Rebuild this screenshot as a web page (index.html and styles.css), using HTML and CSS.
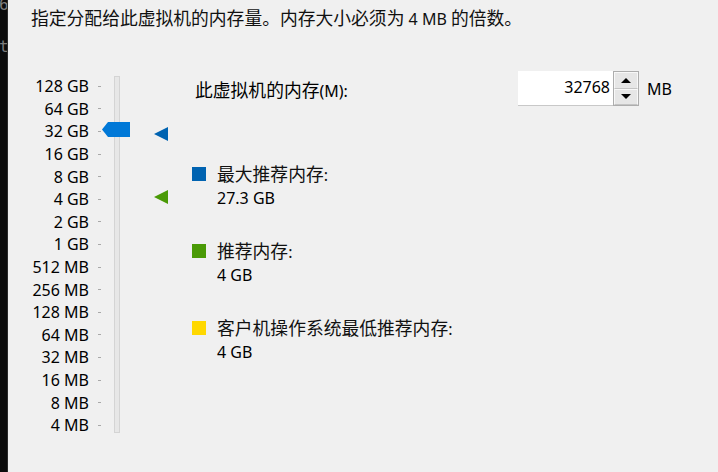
FILE: index.html
```html
<!DOCTYPE html>
<html lang="zh-CN">
<head>
<meta charset="utf-8">
<title>内存</title>
<link rel="stylesheet" href="styles.css">
</head>
<body>
<div class="window">
  <div class="strip"><span class="s1">6</span><span class="s2">t</span></div>
  <div class="page">
    <p class="intro"><span class="cjk">指定分配给此虚拟机的内存量。内存大小必须为</span> 4 MB <span class="cjk">的倍数。</span></p>
    <div class="body">
      <div class="slider">
        <div class="scale">
          <div class="row"><span class="lbl">128 GB</span><span class="tick"></span></div>
          <div class="row"><span class="lbl">64 GB</span><span class="tick"></span></div>
          <div class="row"><span class="lbl">32 GB</span><span class="tick"></span></div>
          <div class="row"><span class="lbl">16 GB</span><span class="tick"></span></div>
          <div class="row"><span class="lbl">8 GB</span><span class="tick"></span></div>
          <div class="row"><span class="lbl">4 GB</span><span class="tick"></span></div>
          <div class="row"><span class="lbl">2 GB</span><span class="tick"></span></div>
          <div class="row"><span class="lbl">1 GB</span><span class="tick"></span></div>
          <div class="row"><span class="lbl">512 MB</span><span class="tick"></span></div>
          <div class="row"><span class="lbl">256 MB</span><span class="tick"></span></div>
          <div class="row"><span class="lbl">128 MB</span><span class="tick"></span></div>
          <div class="row"><span class="lbl">64 MB</span><span class="tick"></span></div>
          <div class="row"><span class="lbl">32 MB</span><span class="tick"></span></div>
          <div class="row"><span class="lbl">16 MB</span><span class="tick"></span></div>
          <div class="row"><span class="lbl">8 MB</span><span class="tick"></span></div>
          <div class="row"><span class="lbl">4 MB</span><span class="tick"></span></div>
        </div>
        <div class="track"></div>
        <svg class="thumb" width="28" height="15" viewBox="0 0 28 15"><polygon points="0,7.5 6,0 28,0 28,15 6,15" fill="#0078d7"/></svg>
        <svg class="marker marker-max" width="14" height="14" viewBox="0 0 14 14"><polygon points="0,7 14,0 14,14" fill="#0063b1"/></svg>
        <svg class="marker marker-rec" width="14" height="14" viewBox="0 0 14 14"><polygon points="0,7 14,0 14,14" fill="#4a9a06"/></svg>
      </div>
      <div class="panel">
        <div class="mem-row">
          <span class="mem-label"><span class="cjk">此虚拟机的内存</span>(M):</span>
          <div class="spin">
            <div class="spin-input">32768</div>
            <div class="spin-btns">
              <div class="spin-btn"><span class="arrow-up"></span></div>
              <div class="spin-btn"><span class="arrow-down"></span></div>
            </div>
          </div>
          <span class="unit">MB</span>
        </div>
        <div class="legend">
          <div class="item">
            <span class="swatch swatch-blue"></span>
            <span class="item-label"><span class="cjk">最大推荐内存</span>:</span>
            <span class="item-value">27.3 GB</span>
          </div>
          <div class="item">
            <span class="swatch swatch-green"></span>
            <span class="item-label"><span class="cjk">推荐内存</span>:</span>
            <span class="item-value">4 GB</span>
          </div>
          <div class="item">
            <span class="swatch swatch-yellow"></span>
            <span class="item-label"><span class="cjk">客户机操作系统最低推荐内存</span>:</span>
            <span class="item-value">4 GB</span>
          </div>
        </div>
      </div>
    </div>
  </div>
</div>
</body>
</html>
```
FILE: styles.css
```css
html, body {
  margin: 0;
  padding: 0;
}
body {
  background: #f0f0f0;
  font-family: "Noto Sans", "Noto Sans CJK SC", sans-serif;
  font-size: 16px;
  color: #000;
}
.window {
  display: flex;
  width: 718px;
  height: 472px;
  overflow: hidden;
}
.strip {
  width: 7px;
  flex: none;
  background: #0c0c0c;
  border-right: 1px solid #2b2b2b;
  overflow: hidden;
  display: flex;
  flex-direction: column;
  font-family: "DejaVu Sans Mono", monospace;
  font-size: 16px;
  line-height: 20px;
  color: #7c7c7c;
}
.strip span {
  display: block;
  margin-left: -1px;
}
.strip .s1 { margin-top: -5px; }
.strip .s2 { margin-top: 22px; }
.page {
  flex: 1;
  display: flex;
  flex-direction: column;
}
.cjk {
  font-family: "Noto Sans CJK SC", sans-serif;
  font-size: 17.8px;
}
.intro {
  margin: 0;
  height: 40px;
  box-sizing: border-box;
  padding: 6px 0 0 23px;
  line-height: 23px;
  color: #111;
}
.body {
  display: flex;
  flex: 1;
}
.slider {
  position: relative;
  width: 184px;
  flex: none;
  display: flex;
  align-items: flex-start;
  padding-top: 35px;
  box-sizing: border-box;
}
.scale {
  margin-left: 12px;
  display: flex;
  flex-direction: column;
}
.row {
  height: 22.6px;
  display: flex;
  align-items: center;
}
.lbl {
  width: 69px;
  text-align: right;
  line-height: 20px;
  white-space: nowrap;
}
.tick {
  margin-left: 9px;
  width: 3px;
  height: 1px;
  background: #a8a8a8;
}
.track {
  margin-left: 13px;
  margin-top: 1px;
  width: 6px;
  height: 357px;
  box-sizing: border-box;
  background: #e7e7e7;
  border: 1px solid #d4d4d4;
}
.thumb {
  position: absolute;
  left: 94px;
  top: 82px;
}
.marker {
  position: absolute;
  left: 146px;
}
.marker-max { top: 87px; }
.marker-rec { top: 150px; }
.panel {
  flex: 1;
  padding-top: 31px;
  display: flex;
  flex-direction: column;
}
.mem-row {
  display: flex;
  align-items: center;
  height: 35px;
}
.mem-label {
  width: 326px;
  padding-left: 3px;
  box-sizing: border-box;
  flex: none;
  white-space: nowrap;
}
.spin {
  display: flex;
  height: 35px;
}
.spin-input {
  width: 95px;
  height: 35px;
  box-sizing: border-box;
  background: #fff;
  border-bottom: 1px solid #c8c8c8;
  text-align: right;
  padding-right: 3px;
  line-height: 33px;
}
.spin-btns {
  width: 26px;
  height: 35px;
  box-sizing: border-box;
  border: 1px solid #adadad;
  display: flex;
  flex-direction: column;
}
.spin-btn {
  flex: 1;
  background: #e6e6e6;
  border: 1px solid #f8f8f8;
  border-bottom-color: #c4c4c4;
  display: flex;
  align-items: center;
  justify-content: center;
}
.arrow-up, .arrow-down {
  width: 0;
  height: 0;
  border-left: 5px solid transparent;
  border-right: 5px solid transparent;
}
.arrow-up { border-bottom: 5px solid #000; }
.arrow-down { border-top: 5px solid #000; }
.unit {
  margin-left: 8px;
}
.legend {
  margin-top: 56px;
  display: flex;
  flex-direction: column;
  gap: 31px;
}
.item {
  display: grid;
  grid-template-columns: 25px auto;
  grid-template-rows: 23px 23px;
  line-height: 23px;
}
.swatch {
  width: 14px;
  height: 14px;
  margin-top: 5px;
}
.swatch-blue { background: #0063b1; }
.swatch-green { background: #4a9a06; }
.swatch-yellow { background: #ffd800; }
.item-label {
  color: #111;
  white-space: nowrap;
  height: 23px;
  overflow: visible;
}
.item-value {
  grid-column: 2;
  height: 23px;
  box-sizing: border-box;
  padding-top: 2px;
}
```
